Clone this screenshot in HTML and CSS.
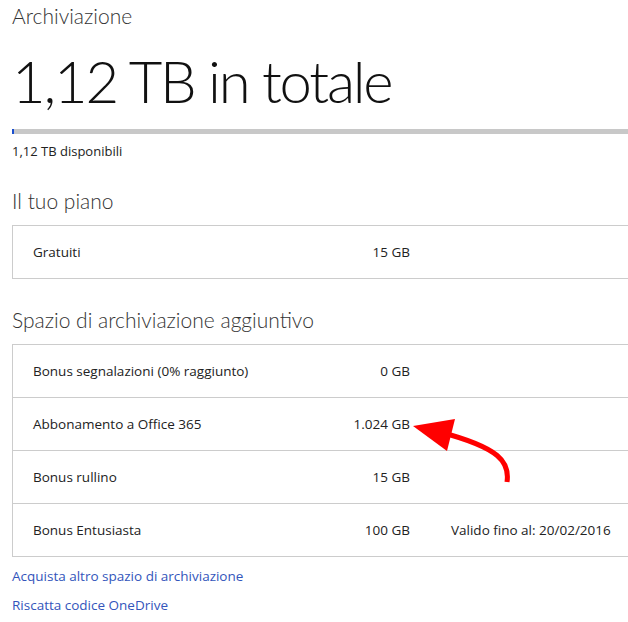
FILE: index.html
```html
<!DOCTYPE html>
<html lang="it">
  <head>
    <meta charset="UTF-8" />
    <meta name="viewport" content="width=device-width, initial-scale=1.0" />
    <title>Archiviazione</title>
    <link rel="stylesheet" href="styles.css">
  </head>
  <body>
    <div id="page">
      <h2 class="title">Archiviazione</h2>
      <h1 class="total">1,12 TB in totale</h1>

      <div class="usage-bar">
        <div class="usage-fill" style="width: 2px"></div>
      </div>
      <div class="usage-text">1,12 TB disponibili</div>

      <h3 class="section">Il tuo piano</h3>
      <div class="table">
        <div class="row">
          <span class="label">Gratuiti</span>
          <span class="value">15 GB</span>
          <span class="note"></span>
        </div>
      </div>

      <h3 class="section section-more">Spazio di archiviazione aggiuntivo</h3>
      <div class="table">
        <div class="row">
          <span class="label">Bonus segnalazioni (0% raggiunto)</span>
          <span class="value">0 GB</span>
          <span class="note"></span>
        </div>
        <div class="row">
          <span class="label">Abbonamento a Office 365</span>
          <span class="value">1.024 GB</span>
          <span class="note"></span>
        </div>
        <div class="row">
          <span class="label">Bonus rullino</span>
          <span class="value">15 GB</span>
          <span class="note"></span>
        </div>
        <div class="row">
          <span class="label">Bonus Entusiasta</span>
          <span class="value">100 GB</span>
          <span class="note">Valido fino al: 20/02/2016</span>
        </div>
      </div>

      <div class="links">
        <a href="#">Acquista altro spazio di archiviazione</a>
        <a href="#">Riscatta codice OneDrive</a>
      </div>

      <!-- freccia rossa disegnata sopra lo screenshot -->
      <svg class="arrow" width="628" height="622" viewBox="0 0 628 622">
        <path d="M507 482 C 510 462, 500 448, 440 432" fill="none" stroke="#ff0000" stroke-width="5" stroke-linecap="butt" />
        <polygon points="413,426 455,419 447,451" fill="#ff0000" />
      </svg>
    </div>
  </body>
</html>
```

FILE: styles.css
```css
html,
body {
  margin: 0;
  padding: 0;
  overflow: hidden;
  background-color: #fff;
}

body {
  font-family: "Open Sans", "Noto Sans", sans-serif;
  color: #222;
}

#page {
  position: relative;
  padding: 0 0 0 12px;
}

.title {
  margin: 0;
  padding-top: 2px;
  font-family: Lato, "Open Sans", sans-serif;
  font-size: 21px;
  font-weight: 300;
  line-height: 28px;
  color: #333;
}

.total {
  margin: 0;
  padding-top: 11px;
  font-family: Lato, "Open Sans", sans-serif;
  font-size: 58px;
  font-weight: 300;
  line-height: 80px;
  letter-spacing: -2.2px;
  color: #111;
}

.usage-bar {
  margin-top: 8px;
  height: 5px;
  background-color: #c8c8c8;
}

.usage-fill {
  height: 100%;
  background-color: #1a4fcf;
}

.usage-text {
  margin-top: 9px;
  font-size: 13px;
  line-height: 16px;
}

.section {
  margin: 0;
  padding-top: 28px;
  font-family: Lato, "Open Sans", sans-serif;
  font-size: 21px;
  font-weight: 300;
  line-height: 28px;
  color: #333;
}

.section-more {
  padding-top: 27px;
}

.table {
  margin-top: 10px;
  border: 1px solid #ccc;
  border-right: none;
  margin-right: -20px;
}

.row {
  display: grid;
  grid-template-columns: 20px 200px 177px 41px auto;
  height: 52px;
  align-items: center;
  font-size: 13.5px;
  border-top: 1px solid #ccc;
}

.row:first-child {
  border-top: none;
}

.label {
  grid-column: 2;
  white-space: nowrap;
}

.value {
  grid-column: 3;
  text-align: right;
  white-space: nowrap;
}

.note {
  grid-column: 5;
  white-space: nowrap;
}

.links {
  display: flex;
  flex-direction: column;
  gap: 11px;
  margin-top: 10px;
}

.links a {
  font-size: 13.5px;
  line-height: 18px;
  color: #3355bb;
  text-decoration: none;
}

.arrow {
  position: absolute;
  left: 0;
  top: 0;
  pointer-events: none;
}
```
